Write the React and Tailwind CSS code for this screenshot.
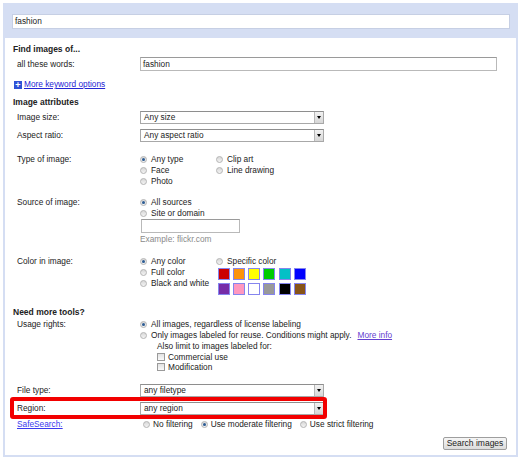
import React from "react";

const Radio = ({ checked }) => (
  <span className="inline-flex w-[7px] h-[7px] shrink-0 rounded-full border border-[#b4b4b4] bg-gradient-to-b from-[#d8d8d8] to-[#f4f4f4] items-center justify-center">
    {checked && <span className="w-[3px] h-[3px] rounded-full bg-[#2c5c94]" />}
  </span>
);

const Check = () => (
  <span className="inline-block w-[8px] h-[8px] shrink-0 border border-[#9a9a9a] bg-gradient-to-b from-[#e2e2e2] to-[#fafafa]" />
);

const Opt = ({ checked, children }) => (
  <div className="flex items-center gap-[4px] h-[11px]">
    <Radio checked={checked} />
    <span>{children}</span>
  </div>
);

const Select = ({ value }) => (
  <div className="w-[184px] h-[13px] flex border border-[#a8a8a8] border-t-[#8e8e8e] bg-white">
    <span className="flex-1 pl-[3px] leading-[11px]">{value}</span>
    <span className="w-[9px] flex items-center justify-center border-l border-[#b8b8b8] bg-gradient-to-b from-[#f2f2f2] to-[#d6d6d6]">
      <span className="w-0 h-0 border-l-[2.5px] border-r-[2.5px] border-t-[3px] border-l-transparent border-r-transparent border-t-black" />
    </span>
  </div>
);

const Row = ({ label, className = "", children, center }) => (
  <div className={`flex pl-[12px] ${center ? "items-center" : ""} ${className}`}>
    <div className="w-[123px] shrink-0">{label}</div>
    <div>{children}</div>
  </div>
);

const swatches = [
  "bg-[#cc0000]",
  "bg-[#fb940b]",
  "bg-[#ffff00]",
  "bg-[#00cc00]",
  "bg-[#03c0c6]",
  "bg-[#0000ff]",
  "bg-[#762ca7]",
  "bg-[#ff98bf]",
  "bg-[#ffffff]",
  "bg-[#999999]",
  "bg-[#000000]",
  "bg-[#885418]",
];

export default function App() {
  return (
    <div className="w-[521px] h-[460px] bg-white pt-[3px] pl-[3px] font-['Liberation_Sans',Arial,sans-serif] text-[8.3px] leading-[11px] text-[#222]">
      <div className="w-[515px] h-[454px] bg-[#d5def3] flex flex-col">
        {/* search bar */}
        <div className="h-[35px] shrink-0 pl-[9px] pt-[11px]">
          <div className="w-[498px] h-[15px] bg-white border border-[#c6cfe4] pl-[2px] leading-[13px]">
            fashion
          </div>
        </div>

        <div className="flex-1 bg-white mx-[2px] mb-[2px] flex flex-col">
          <div className="pl-[8px] mt-[6px] font-bold text-[8.5px]">Find images of...</div>
          <Row label="all these words:" className="mt-[2px]" center>
            <div className="w-[357px] h-[14px] border border-[#b9b9b9] border-t-[#9a9a9a] pl-[2px] leading-[12px]">
              fashion
            </div>
          </Row>

          <div className="pl-[9px] mt-[8px] flex items-center gap-[2px]">
            <span className="w-[8px] h-[8px] bg-[#2f52d6] flex items-center justify-center text-white font-bold text-[9px] leading-[8px]">
              +
            </span>
            <a className="text-[#2424d4] underline">More keyword options</a>
          </div>

          <div className="pl-[8px] mt-[7px] font-bold text-[8.5px]">Image attributes</div>
          <Row label="Image size:" className="mt-[3px]" center>
            <Select value="Any size" />
          </Row>
          <Row label="Aspect ratio:" className="mt-[5px]" center>
            <Select value="Any aspect ratio" />
          </Row>

          <Row label="Type of image:" className="mt-[12px]">
            <div className="flex">
              <div className="w-[76px]">
                <Opt checked>Any type</Opt>
                <Opt>Face</Opt>
                <Opt>Photo</Opt>
              </div>
              <div>
                <Opt>Clip art</Opt>
                <Opt>Line drawing</Opt>
              </div>
            </div>
          </Row>

          <Row label="Source of image:" className="mt-[10px]">
            <Opt checked>All sources</Opt>
            <Opt>Site or domain</Opt>
            <div className="ml-[1px] w-[99px] h-[14px] border border-[#b9b9b9] border-t-[#9a9a9a]" />
            <div className="mt-[1px] text-[#8a8a8a]">Example: flickr.com</div>
          </Row>

          <Row label="Color in image:" className="mt-[11px]">
            <div className="flex">
              <div className="w-[76px]">
                <Opt checked>Any color</Opt>
                <Opt>Full color</Opt>
                <Opt>Black and white</Opt>
              </div>
              <div>
                <Opt>Specific color</Opt>
                <div className="mt-[1px] pl-[1.5px] grid grid-cols-6 gap-[3px] w-[90px]">
                  {swatches.map((c) => (
                    <span key={c} className={`w-[12px] h-[12px] border border-[#8585ee] ${c}`} />
                  ))}
                </div>
              </div>
            </div>
          </Row>

          <div className="pl-[8px] mt-[12px] font-bold text-[8.5px]">Need more tools?</div>
          <Row label="Usage rights:" className="mt-[1px]">
            <Opt checked>All images, regardless of license labeling</Opt>
            <div className="flex items-center gap-[4px] h-[11px]">
              <Radio />
              <span>Only images labeled for reuse. Conditions might apply.</span>
              <a className="ml-[2px] text-[#6440d0] underline">More info</a>
            </div>
            <div className="pl-[17px]">Also limit to images labeled for:</div>
            <div className="pl-[17px] flex items-center gap-[3px] h-[10px]">
              <Check />
              <span>Commercial use</span>
            </div>
            <div className="pl-[17px] flex items-center gap-[3px] h-[10px]">
              <Check />
              <span>Modification</span>
            </div>
          </Row>

          <Row label="File type:" className="mt-[12px]" center>
            <Select value="any filetype" />
          </Row>
          <div className="relative mt-[5px]">
            <Row label="Region:" center>
              <Select value="any region" />
            </Row>
            <div className="absolute left-[5px] top-[-5px] w-[317px] h-[22px] border-4 border-[#f20000] rounded-[3px]" />
          </div>

          <Row
            label={<a className="text-[#3a3aee] underline">SafeSearch:</a>}
            className="mt-[4px]"
          >
            <div className="flex items-center h-[11px] pl-[3px]">
              <Radio />
              <span className="ml-[3px]">No filtering</span>
              <span className="ml-[8px]" />
              <Radio checked />
              <span className="ml-[3px]">Use moderate filtering</span>
              <span className="ml-[8px]" />
              <Radio />
              <span className="ml-[3px]">Use strict filtering</span>
            </div>
          </Row>

          <div className="flex justify-end pr-[9px] mt-[7px]">
            <button className="w-[64px] h-[13px] border border-[#9e9e9e] rounded-[2px] bg-gradient-to-b from-[#f6f6f6] to-[#dcdcdc] text-[8.5px] leading-[11px] text-[#222]">
              Search images
            </button>
          </div>
        </div>
      </div>
    </div>
  );
}
